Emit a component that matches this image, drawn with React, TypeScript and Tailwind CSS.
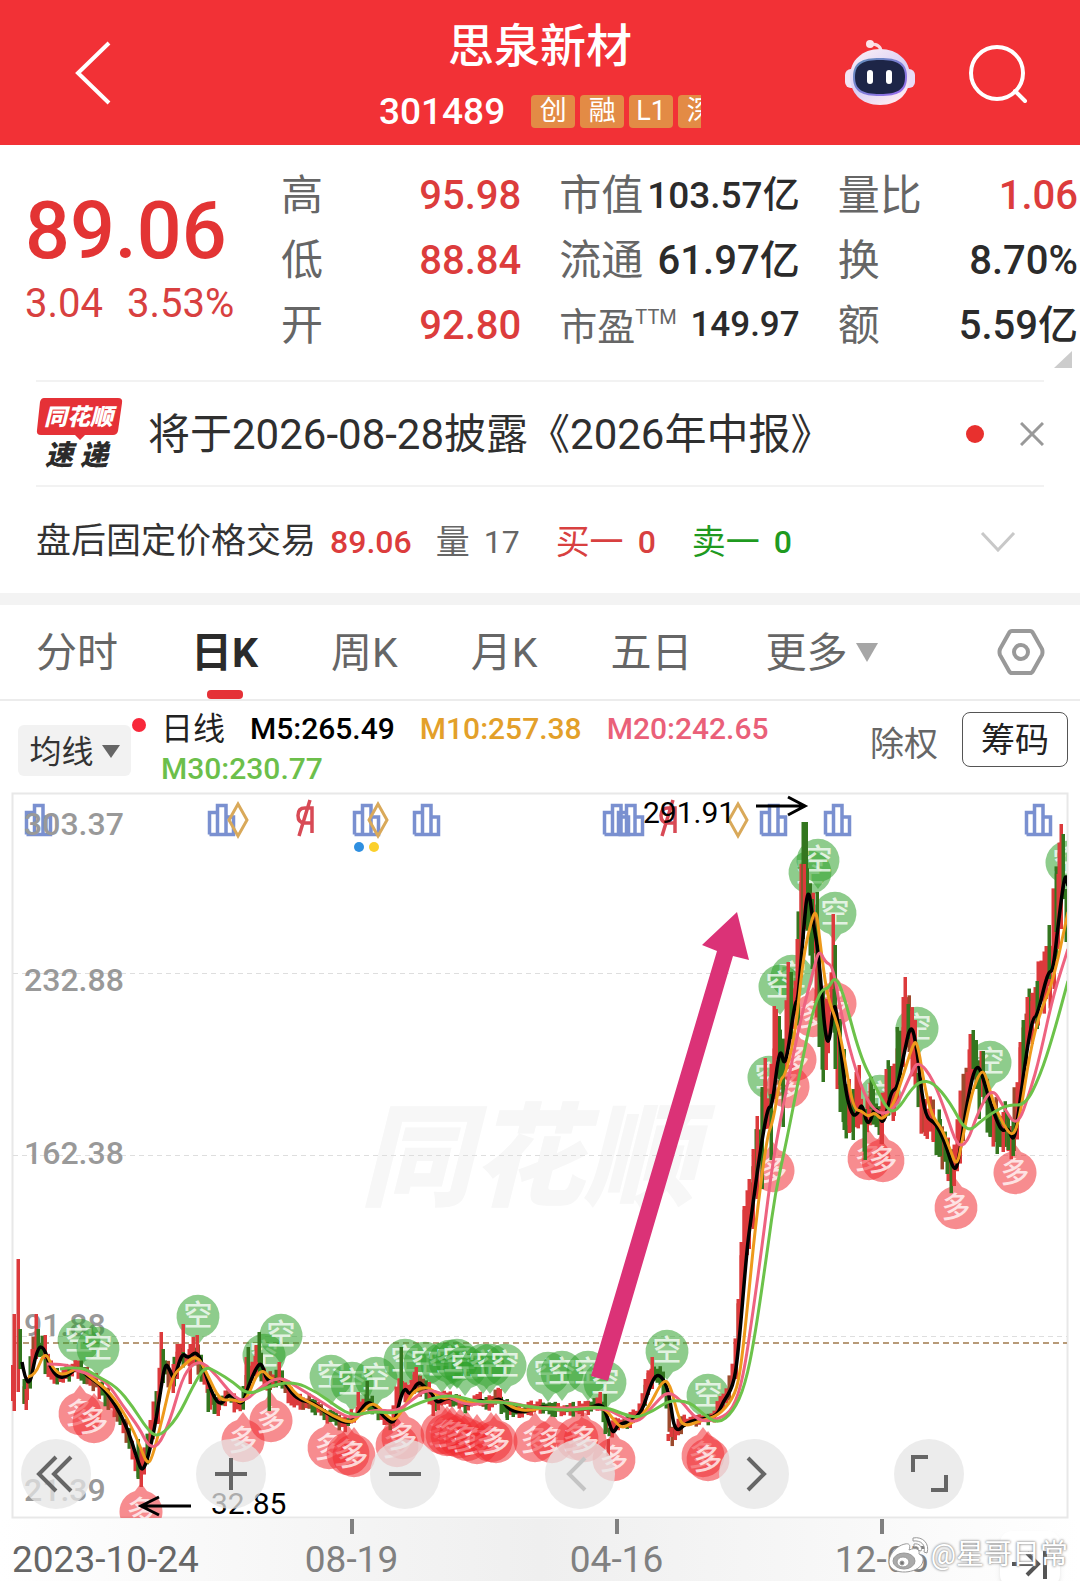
import type { ReactNode } from 'react';

type Point = [number, number];

const MA5: Point[] = [
  [22, 1363], [28, 1397], [37, 1348], [44, 1348], [50, 1368], [58, 1379], [68, 1377], [78, 1367], [87, 1377], [100, 1385],
  [115, 1405], [128, 1430], [137, 1460], [143, 1475], [152, 1443], [159, 1403], [165, 1363], [170, 1371], [174, 1382],
  [182, 1353], [188, 1360], [197, 1351], [205, 1373], [213, 1397], [221, 1407], [230, 1393], [242, 1408], [248, 1388],
  [257, 1367], [262, 1364], [267, 1383], [275, 1380], [283, 1380], [292, 1395], [302, 1402], [312, 1403], [325, 1413],
  [347, 1426], [357, 1417], [367, 1402], [375, 1407], [388, 1422], [395, 1424], [400, 1400], [405, 1388], [410, 1397],
  [418, 1382], [425, 1388], [432, 1394], [437, 1405], [447, 1398], [460, 1402], [470, 1407], [480, 1400], [488, 1405],
  [500, 1398], [508, 1410], [518, 1413], [530, 1412], [542, 1407], [553, 1410], [570, 1410], [587, 1410], [602, 1404],
  [607, 1417], [613, 1436], [618, 1425], [630, 1423], [642, 1413], [650, 1387], [657, 1374], [665, 1382], [670, 1400],
  [675, 1435], [687, 1423], [703, 1420], [717, 1417], [723, 1403], [733, 1388], [738, 1357], [747, 1250], [750, 1227],
  [760, 1153], [768, 1107], [772, 1109], [780, 1044], [785, 1073], [795, 1002], [798, 1002], [803, 937], [808, 884],
  [813, 923], [818, 950], [822, 997], [825, 1033], [829, 1048], [834, 1000], [838, 1023], [845, 1090], [852, 1117],
  [858, 1115], [862, 1103], [868, 1130], [876, 1104], [883, 1130], [891, 1092], [897, 1090], [903, 1060], [911, 1022],
  [917, 1050], [922, 1097], [927, 1120], [935, 1123], [945, 1143], [955, 1176], [960, 1153], [967, 1103], [977, 1059],
  [987, 1093], [997, 1123], [1003, 1133], [1008, 1128], [1014, 1145], [1020, 1103], [1027, 1050], [1033, 1018],
  [1037, 1018], [1048, 972], [1053, 973], [1058, 927], [1065, 872], [1068, 887],
];

const MA10: Point[] = [
  [28, 1378], [35, 1377], [45, 1351], [53, 1370], [63, 1377], [78, 1368], [93, 1380], [110, 1393], [128, 1420], [140, 1447],
  [147, 1465], [152, 1460], [163, 1417], [172, 1377], [183, 1367], [197, 1355], [208, 1377], [220, 1402], [233, 1400],
  [245, 1405], [260, 1367], [272, 1382], [283, 1378], [297, 1397], [313, 1405], [333, 1417], [352, 1425], [362, 1413],
  [373, 1402], [387, 1417], [395, 1422], [405, 1407], [415, 1390], [430, 1388], [440, 1400], [452, 1398], [470, 1405],
  [487, 1402], [503, 1402], [515, 1410], [530, 1412], [543, 1408], [570, 1410], [603, 1407], [613, 1420], [622, 1430],
  [633, 1423], [647, 1412], [663, 1380], [670, 1385], [677, 1413], [683, 1428], [700, 1422], [718, 1417], [733, 1400],
  [740, 1377], [748, 1303], [755, 1230], [767, 1137], [773, 1123], [780, 1080], [785, 1077], [795, 1037], [803, 960],
  [810, 927], [816, 908], [820, 943], [827, 997], [837, 1023], [843, 1050], [853, 1110], [862, 1112], [868, 1118],
  [875, 1113], [882, 1122], [893, 1107], [903, 1077], [912, 1048], [917, 1040], [925, 1090], [932, 1117], [942, 1130],
  [950, 1150], [957, 1169], [963, 1137], [972, 1093], [980, 1073], [985, 1073], [993, 1103], [1003, 1125], [1013, 1139],
  [1020, 1117], [1030, 1053], [1040, 1013], [1053, 983], [1068, 913],
];

const MA20: Point[] = [
  [47, 1365], [67, 1365], [77, 1372], [90, 1375], [107, 1383], [123, 1407], [140, 1430], [148, 1447], [158, 1448],
  [170, 1422], [182, 1380], [192, 1365], [203, 1363], [217, 1377], [233, 1397], [245, 1403], [260, 1388], [280, 1377],
  [297, 1388], [317, 1400], [337, 1413], [353, 1420], [373, 1410], [397, 1413], [413, 1400], [427, 1390], [443, 1395],
  [467, 1407], [487, 1403], [510, 1403], [537, 1410], [603, 1408], [620, 1417], [637, 1425], [653, 1407], [667, 1392],
  [680, 1400], [698, 1423], [720, 1420], [733, 1410], [743, 1380], [753, 1313], [763, 1240], [773, 1160], [787, 1087],
  [800, 1023], [813, 973], [819, 950], [825, 963], [833, 967], [840, 1010], [853, 1063], [867, 1103], [882, 1117],
  [897, 1107], [910, 1077], [918, 1061], [933, 1080], [947, 1117], [957, 1147], [967, 1145], [978, 1113], [992, 1088],
  [1003, 1107], [1017, 1129], [1030, 1093], [1040, 1057], [1053, 997], [1068, 950],
];

const MA30: Point[] = [
  [60, 1370], [80, 1367], [97, 1377], [117, 1388], [133, 1408], [147, 1430], [158, 1439], [177, 1420], [193, 1387],
  [205, 1367], [217, 1373], [233, 1383], [248, 1396], [267, 1388], [293, 1382], [317, 1393], [337, 1408], [353, 1417],
  [373, 1412], [397, 1415], [420, 1403], [450, 1395], [477, 1403], [503, 1403], [530, 1408], [570, 1412], [603, 1407],
  [623, 1415], [637, 1419], [653, 1412], [670, 1401], [690, 1403], [703, 1415], [718, 1425], [733, 1413], [745, 1387],
  [755, 1337], [768, 1247], [775, 1195], [787, 1140], [800, 1073], [813, 1010], [822, 990], [828, 990], [835, 977],
  [843, 993], [860, 1057], [875, 1087], [888, 1112], [897, 1112], [910, 1092], [920, 1082], [933, 1083], [950, 1103],
  [967, 1135], [983, 1120], [1007, 1105], [1025, 1107], [1040, 1077], [1053, 1037], [1068, 982],
];

const RED = '#dc3a3c';
const GREEN = '#33761f';
const BROWN = '#9c4a2c';

// x, high, low, rising
const SPIKES: [number, number, number, 0 | 1][] = [
  [12, 1366, 1402, 1], [14, 1315, 1412, 1], [18, 1260, 1393, 1], [20, 1330, 1370, 0], [24, 1380, 1405, 0], [26, 1390, 1411, 1],
  [32, 1350, 1375, 1], [36, 1315, 1360, 1], [38, 1330, 1350, 0], [45, 1336, 1360, 1], [138, 1440, 1480, 0], [141, 1450, 1488, 1],
  [161, 1333, 1383, 1], [163, 1350, 1384, 0], [158, 1392, 1425, 1], [173, 1365, 1394, 1], [177, 1345, 1380, 1], [183, 1325, 1353, 1],
  [190, 1345, 1385, 1], [193, 1338, 1365, 1], [197, 1336, 1360, 1], [208, 1390, 1413, 0], [214, 1395, 1415, 0], [218, 1400, 1417, 1],
  [246, 1358, 1390, 1], [248, 1348, 1390, 0], [256, 1346, 1375, 1], [259, 1333, 1363, 0], [269, 1380, 1412, 0], [279, 1363, 1385, 1],
  [358, 1393, 1415, 1], [367, 1382, 1400, 0], [399, 1380, 1400, 1], [401, 1348, 1397, 0], [416, 1368, 1390, 1], [433, 1392, 1417, 1],
  [500, 1390, 1402, 1], [507, 1400, 1421, 0], [600, 1393, 1406, 1], [605, 1395, 1435, 0], [608, 1440, 1457, 1], [645, 1380, 1405, 1],
  [648, 1374, 1396, 1], [652, 1358, 1390, 1], [668, 1435, 1442, 1], [671, 1429, 1438, 1], [736, 1340, 1380, 1], [738, 1300, 1350, 1],
  [741, 1243, 1300, 1], [744, 1207, 1280, 1], [749, 1180, 1250, 1], [753, 1150, 1230, 1], [757, 1117, 1200, 1], [762, 1088, 1190, 0],
  [765, 1059, 1130, 1], [771, 1095, 1161, 0], [774, 1007, 1100, 1], [779, 1017, 1080, 0], [776, 1010, 1060, 1], [783, 1060, 1128, 0],
  [788, 963, 1050, 1], [791, 973, 1040, 0], [797, 940, 1010, 1], [801, 883, 960, 1], [803, 823, 940, 0], [806, 823, 920, 0],
  [804, 865, 930, 1], [812, 900, 970, 0], [817, 893, 960, 0], [819, 940, 1048, 0], [823, 990, 1083, 0], [826, 1000, 1071, 1],
  [833, 915, 990, 1], [835, 946, 1070, 0], [840, 1020, 1113, 0], [844, 1050, 1131, 0], [849, 1080, 1134, 1], [853, 1090, 1141, 0],
  [856, 1073, 1110, 1], [859, 1066, 1100, 1], [865, 1110, 1161, 0], [871, 1078, 1110, 0], [881, 1110, 1145, 1], [886, 1070, 1115, 1],
  [889, 1067, 1100, 0], [893, 1090, 1122, 1], [897, 1028, 1090, 0], [903, 998, 1060, 1], [905, 978, 1040, 1], [908, 1005, 1040, 0],
  [912, 1012, 1060, 1], [925, 1100, 1137, 1], [933, 1110, 1143, 1], [940, 1120, 1157, 0], [947, 1140, 1175, 0], [954, 1150, 1187, 1],
  [967, 1073, 1110, 1], [970, 1035, 1090, 1], [973, 1031, 1070, 0], [976, 1041, 1090, 0], [983, 1052, 1080, 0], [979, 1070, 1120, 0],
  [990, 1100, 1138, 0], [997, 1110, 1155, 0], [1003, 1113, 1153, 1], [1008, 1115, 1151, 0], [1013, 1120, 1157, 0],
  [1020, 1043, 1110, 1], [1023, 1021, 1080, 0], [1027, 998, 1050, 1], [1032, 1002, 1045, 1], [1037, 982, 1030, 0],
  [1046, 947, 1000, 1], [1049, 926, 980, 0], [1054, 933, 990, 1], [1058, 875, 950, 1], [1061, 825, 930, 1], [1063, 835, 900, 0],
  [1066, 890, 943, 0],
];

const SHORT_PINS: Point[] = [
  [79, 1341], [98, 1349], [198, 1317], [264, 1356], [281, 1336], [331, 1377], [352, 1384], [376, 1379], [405, 1361],
  [425, 1364], [442, 1365], [450, 1362], [457, 1361], [465, 1368], [483, 1366], [490, 1366], [505, 1366], [548, 1374],
  [562, 1373], [588, 1373], [605, 1383], [667, 1352], [708, 1396], [810, 873], [818, 861], [835, 914], [792, 977],
  [780, 987], [769, 1078], [917, 1029], [880, 1097], [990, 1063], [1067, 863],
];

const LONG_PINS: Point[] = [
  [80, 1415], [94, 1423], [141, 1513], [243, 1442], [271, 1422], [329, 1449], [348, 1455], [354, 1457], [397, 1447],
  [403, 1439], [442, 1434], [447, 1436], [452, 1436], [460, 1438], [467, 1441], [477, 1444], [491, 1442], [496, 1443],
  [535, 1442], [552, 1443], [577, 1440], [585, 1442], [614, 1461], [703, 1457], [708, 1461], [773, 1172], [788, 1088],
  [795, 1061], [835, 1005], [813, 1017], [869, 1160], [883, 1162], [956, 1209], [1015, 1174],
];

const PRICES = [
  { value: '303.37', y: 836 },
  { value: '232.88', y: 992 },
  { value: '162.38', y: 1165 },
  { value: '91.88', y: 1337 },
  { value: '21.39', y: 1502 },
];

function smooth(points: Point[]) {
  let d = `M${points[0][0]} ${points[0][1]}`;
  for (let i = 1; i < points.length - 1; i++) {
    const [x, y] = points[i];
    const [nx, ny] = points[i + 1];
    d += ` Q${x} ${y} ${(x + nx) / 2} ${(y + ny) / 2}`;
  }
  const last = points[points.length - 1];
  return `${d} L${last[0]} ${last[1]}`;
}

function valueAt(points: Point[], x: number) {
  for (let i = 1; i < points.length; i++) {
    if (points[i][0] >= x) {
      const [x0, y0] = points[i - 1];
      const [x1, y1] = points[i];
      return y0 + ((y1 - y0) * (x - x0)) / (x1 - x0);
    }
  }
  return points[points.length - 1][1];
}

function buildBars() {
  const bars: { x: number; top: number; bottom: number; color: string }[] = [];
  let seed = 7;
  const random = () => {
    seed = (seed * 16807) % 2147483647;
    return seed / 2147483647;
  };
  for (let x = 24; x < 1064; x += 3) {
    const y = valueAt(MA5, x + 3);
    const slope = valueAt(MA5, x + 6) - valueAt(MA5, x);
    const range = 5 + (1430 - Math.min(y, 1430)) * 0.04 + Math.abs(slope) * 0.3;
    const top = y - range * (0.4 + random());
    const bottom = y + range * (0.4 + random());
    const r = random();
    const rising = slope < 0 ? r < 0.75 : r < 0.35;
    bars.push({ x, top, bottom, color: rising ? RED : random() < 0.3 ? BROWN : GREEN });
  }
  return bars;
}

const BARS = buildBars();

function Pin({ x, y, kind }: { x: number; y: number; kind: 'short' | 'long' }) {
  const short = kind === 'short';
  return (
    <g transform={`translate(${x} ${y})`}>
      <path
        d={
          short
            ? 'M0 29 L-6 21 A21.5 21.5 0 1 1 6 21 Z'
            : 'M0 -29 L-6 -21 A21.5 21.5 0 1 0 6 -21 Z'
        }
        fill={short ? '#2fa02b' : '#f02a30'}
        fillOpacity={0.54}
      />
      <text y={10} textAnchor="middle" fontSize={29} fontWeight={500} fill="#fff" fillOpacity={0.75}>
        {short ? '空' : '多'}
      </text>
    </g>
  );
}

function ReportMark({ x }: { x: number }) {
  return (
    <path
      transform={`translate(${x} 805)`}
      d="M1.5 30.5 V8.5 H9.5 M9.5 30.5 V1.5 H18 V30.5 M18 13 H25.5 V30.5 H1.5"
      fill="none"
      stroke="#7a90d0"
      strokeWidth={3.5}
    />
  );
}

function DividendMark({ x }: { x: number }) {
  return (
    <path
      transform={`translate(${x} 800)`}
      d="M17 34 V9 H10 Q3 9 3 16.500 Q3 24 10 24 H17 M15 1 L4 37"
      fill="none"
      stroke="#d84a55"
      strokeWidth={3.5}
    />
  );
}

function KLineChart() {
  return (
    <svg viewBox="0 790 1080 730" className="block w-full" role="img" aria-label="日K线">
      <defs>
        <clipPath id="plot">
          <rect x="11" y="794" width="1056" height="725" />
        </clipPath>
      </defs>
      <rect x="12.500" y="794.500" width="1055" height="724" fill="#fff" stroke="#e8e8e8" strokeWidth="2" />
      <text x="360" y="1198" fontSize="112" fontWeight="900" fontStyle="italic" fill="#f7f7f7">同花顺</text>
      <g stroke="#dedede" strokeWidth="1" strokeDasharray="5 4">
        <path d="M13 981 H1067" stroke="none" />
        <path d="M13 974.500 H1067 M13 1156.500 H1067 M13 1337.500 H1067" />
      </g>
      <path d="M13 1344 H1067" stroke="#b79a78" strokeWidth="2" strokeDasharray="6 4" />

      <g>
        {[25, 208, 353, 413, 603, 617, 760, 824, 1025].map((x) => (
          <ReportMark key={x} x={x} />
        ))}
        {[295, 658].map((x) => (
          <DividendMark key={x} x={x} />
        ))}
        {[238, 378, 738].map((x) => (
          <path key={x} d={`M${x} 805 l9 16 l-9 16 l-9 -16 Z`} fill="none" stroke="#d9a95a" strokeWidth="3" />
        ))}
        <circle cx="359" cy="848" r="5" fill="#2f8fe0" />
        <circle cx="374" cy="848" r="5" fill="#fbd02c" />
      </g>

      <g fontSize="32" fill="#999" fontWeight="500">
        {PRICES.map((p) => (
          <text key={p.value} x="24" y={p.y}>
            {p.value}
          </text>
        ))}
      </g>

      <g clipPath="url(#plot)">
        {SHORT_PINS.map(([x, y], i) => (
          <Pin key={i} x={x} y={y} kind="short" />
        ))}
        {LONG_PINS.map(([x, y], i) => (
          <Pin key={i} x={x} y={y} kind="long" />
        ))}
        {BARS.map((b) => (
          <rect key={b.x} x={b.x - 1.5} y={b.top} width={3.5} height={b.bottom - b.top} fill={b.color} />
        ))}
        {SPIKES.map(([x, high, low, rising], i) => (
          <rect key={i} x={x - 1.5} y={high} width={3.5} height={low - high} fill={rising ? RED : GREEN} />
        ))}
        <g fill="none" strokeLinejoin="round" strokeWidth="3">
          <path d={smooth(MA5)} stroke="#000" strokeWidth="3.500" />
          <path d={smooth(MA10)} stroke="#ee9a1c" />
          <path d={smooth(MA20)} stroke="#ee6380" />
          <path d={smooth(MA30)} stroke="#6cc24a" />
        </g>
      </g>

      <g fontSize="30" fill="#000">
        <text x="643" y="824">291.91</text>
        <text x="211" y="1515">32.85</text>
      </g>
      <g fill="none" stroke="#000" strokeWidth="3">
        <path d="M756 807 H804 M788 798 L805 807 L788 816" />
        <path d="M191 1507 H142 M159 1498 L141 1507 L159 1516" />
      </g>
      <path d="M737 913 L749 961 L733 957 L608 1382 L591 1377 L717 952 L702 946 Z" fill="#db3277" />
    </svg>
  );
}

function RobotIcon() {
  return (
    <svg viewBox="0 0 72 66" className="w-[72px]" aria-hidden="true">
      <defs>
        <linearGradient id="shell" x1="0" y1="0" x2="0.600" y2="1">
          <stop offset="0" stopColor="#fff2f6" />
          <stop offset="0.600" stopColor="#d9cff5" />
          <stop offset="1" stopColor="#fbe9f2" />
        </linearGradient>
        <linearGradient id="rim" x1="0" y1="0" x2="1" y2="1">
          <stop offset="0" stopColor="#5f8fb8" />
          <stop offset="1" stopColor="#9a6cf0" />
        </linearGradient>
      </defs>
      <path d="M37 12 C37 6 33 4 27 4" fill="none" stroke="#fbdbe2" strokeWidth="3" />
      <circle cx="26" cy="4" r="4" fill="#fce4ea" />
      <rect x="1" y="29" width="14" height="19" rx="6" fill="#f3e4f3" />
      <rect x="57" y="29" width="14" height="19" rx="6" fill="#e8dcf8" />
      <path d="M36 9 C54 9 66 21 66 36 C66 53 55 65 36 65 C17 65 6 53 6 36 C6 21 18 9 36 9 Z" fill="url(#shell)" />
      <path d="M36 18 C54 18 63 22 63 37 C63 52 54 56 36 56 C18 56 9 52 9 37 C9 22 18 18 36 18 Z" fill="url(#rim)" />
      <path d="M36 20 C53 20 61 24 61 37 C61 50 53 54 36 54 C19 54 11 50 11 37 C11 24 19 20 36 20 Z" fill="#1d2547" />
      <rect x="23" y="30" width="6" height="14" rx="3" fill="#fff" />
      <rect x="42" y="30" width="6" height="14" rx="3" fill="#fff" />
    </svg>
  );
}

function Header() {
  return (
    <header className="grid h-[145px] grid-cols-[1fr_auto_1fr] items-center bg-[#f23136] text-white">
      <button type="button" aria-label="返回" className="ml-[74px] w-fit">
        <svg viewBox="0 0 38 64" className="w-[38px]" fill="none" stroke="#fff" strokeWidth="4">
          <path d="M35 2 L4 32 L35 62" />
        </svg>
      </button>
      <div className="w-[322px] pt-1.5">
        <h1 className="text-center text-[46px] leading-[60px] font-medium">思泉新材</h1>
        <div className="mt-3 flex items-center gap-[26px]">
          <span className="text-[37px] leading-[48px] font-medium">301489</span>
          <div className="flex flex-1 gap-[5px] overflow-hidden text-[27px] leading-[33px]">
            {['创', '融', 'L1', '深'].map((tag) => (
              <span key={tag} className="w-11 shrink-0 rounded-sm bg-[#e38b45] text-center">
                {tag}
              </span>
            ))}
          </div>
        </div>
      </div>
      <div className="mr-[52px] flex items-center justify-end gap-[52px]">
        <button type="button" aria-label="智能助手">
          <RobotIcon />
        </button>
        <button type="button" aria-label="搜索">
          <svg viewBox="0 0 60 60" className="w-[60px]" fill="none" stroke="#fff" strokeWidth="4">
            <circle cx="29" cy="30" r="26" />
            <path d="M47 48 L57 58" strokeLinecap="round" strokeWidth="4" />
          </svg>
        </button>
      </div>
    </header>
  );
}

type StatProps = { label: ReactNode; value: string; tone?: string; size?: string };

function Stat({ label, value, tone = 'text-[#2b2b2b]', size = 'text-[40px]' }: StatProps) {
  return (
    <div className="flex h-[65px] items-center justify-between whitespace-nowrap">
      <dt className="text-[42px] text-[#666]">{label}</dt>
      <dd className={`font-medium ${size} ${tone}`}>{value}</dd>
    </div>
  );
}

function Quote() {
  return (
    <section className="relative grid grid-cols-[218px_1fr_1fr_1fr] gap-x-[38px] pt-[18px] pr-0.5 pb-[22px] pl-[25px]">
      <div className="pt-7 text-[#e33434]">
        <div className="text-[79px] leading-20 font-medium">89.06</div>
        <div className="mt-2 flex gap-6 text-[40px] leading-[50px] text-[#d84040]">
          <span>3.04</span>
          <span>3.53%</span>
        </div>
      </div>
      <dl>
        <Stat label="高" value="95.98" tone="text-[#dc3c3c]" />
        <Stat label="低" value="88.84" tone="text-[#dc3c3c]" />
        <Stat label="开" value="92.80" tone="text-[#dc3c3c]" />
      </dl>
      <dl>
        <Stat label="市值" value="103.57亿" size="text-[37px]" />
        <Stat label="流通" value="61.97亿" />
        <Stat
          label={<span className="text-[38px]">市盈<sup className="-top-4 text-[20px]">TTM</sup></span>}
          value="149.97"
          size="text-[35px]"
        />
      </dl>
      <dl>
        <Stat label="量比" value="1.06" tone="text-[#dc3c3c]" />
        <Stat label="换" value="8.70%" />
        <Stat label="额" value="5.59亿" />
      </dl>
      <svg viewBox="0 0 18 17" className="absolute right-2 bottom-3 w-[18px]" aria-hidden="true">
        <path d="M18 0 V17 H0 Z" fill="#ccc" />
      </svg>
    </section>
  );
}

function NewsLogo() {
  return (
    <svg viewBox="0 0 88 74" className="w-[88px] overflow-visible" role="img" aria-label="同花顺速递">
      <path d="M8 1 H82 Q87 1 86 6 L82 34 Q81 38 77 38 H49 L44 43 L39 38 H5 Q0 38 1 33 L4 5 Q5 1 8 1 Z" fill="#e53137" />
      <text x="8" y="28" fontSize="23" fontWeight="900" fontStyle="italic" fill="#fff">同花顺</text>
      <text x="9" y="68" fontSize="28" fontWeight="900" fontStyle="italic" fill="#2b2b2b">速</text>
      <text x="44" y="68" fontSize="28" fontWeight="900" fontStyle="italic" fill="#2b2b2b">递</text>
    </svg>
  );
}

function News() {
  return (
    <div className="mx-9 flex h-[107px] items-center border-y-2 border-[#f2f2f2]">
      <NewsLogo />
      <a href="#news" className="ml-6 flex-1 pt-0.5 text-[42px] whitespace-nowrap text-[#2f2f2f]">
        将于2026-08-28披露《2026年中报》
      </a>
      <span className="size-[18px] rounded-full bg-[#e8302e]" />
      <button type="button" aria-label="关闭" className="ml-9">
        <svg viewBox="0 0 24 24" className="w-6" stroke="#999" strokeWidth="3">
          <path d="M1 1 L23 23 M23 1 L1 23" />
        </svg>
      </button>
    </div>
  );
}

function AfterHours() {
  return (
    <div className="flex h-[106px] items-center pt-1 pr-16 pl-9 text-[32px] whitespace-nowrap">
      <span className="text-[35px] text-[#333]">盘后固定价格交易</span>
      <span className="ml-3.5 font-medium text-[#dc3c3c]">89.06</span>
      <span className="ml-6 text-[34px] text-[#666]">量</span>
      <span className="ml-3.5 text-[#666]">17</span>
      <span className="ml-9 text-[34px] text-[#d84040]">买一</span>
      <span className="ml-3.5 font-medium text-[#d84040]">0</span>
      <span className="ml-9 text-[34px] text-[#1f9a1f]">卖一</span>
      <span className="ml-3.5 font-medium text-[#1f9a1f]">0</span>
      <button type="button" aria-label="展开" className="ml-auto">
        <svg viewBox="0 0 36 20" className="w-9" fill="none" stroke="#c8c8c8" strokeWidth="3">
          <path d="M2 1 L18 18 L34 1" />
        </svg>
      </button>
    </div>
  );
}

const TABS = ['分时', '日K', '周K', '月K', '五日'];

function Tabs() {
  return (
    <nav className="flex h-24 items-stretch justify-between border-b-2 border-[#ececec] pr-[35px] pl-9 text-[41px] text-[#666]">
      <div className="flex gap-[73px]">
        {TABS.map((tab) => (
          <button
            key={tab}
            type="button"
            className={tab === '日K' ? 'relative pt-1 font-bold text-[#2b2b2b]' : 'relative pt-1'}
          >
            {tab}
            {tab === '日K' && (
              <span className="absolute bottom-0 left-1/2 h-[9px] w-9 -translate-x-1/2 rounded bg-[#e53137]" />
            )}
          </button>
        ))}
        <button type="button" className="flex items-center gap-2 pt-1">
          更多
          <svg viewBox="0 0 22 19" className="mb-1 w-[22px]" aria-hidden="true">
            <path d="M0 0 H22 L11 19 Z" fill="#a6a6a6" />
          </svg>
        </button>
      </div>
      <button type="button" aria-label="设置">
        <svg viewBox="0 0 48 46" className="w-12" fill="none" stroke="#999" strokeWidth="4">
          <path d="M15 2 H33 Q35 2 36 4 L45 20 Q46 23 45 26 L36 42 Q35 44 33 44 H15 Q13 44 12 42 L3 26 Q2 23 3 20 L12 4 Q13 2 15 2 Z" />
          <circle cx="24" cy="23" r="7" />
        </svg>
      </button>
    </nav>
  );
}

function Indicators() {
  return (
    <div className="flex h-[88px] items-start pr-3 pl-[18px]">
      <div className="relative mt-6">
        <button type="button" className="flex h-[51px] w-[113px] items-center justify-center gap-2 rounded-md bg-[#f2f2f2] pt-0.5 text-[32px] whitespace-nowrap text-[#333]">
          均线
          <svg viewBox="0 0 18 13" className="w-[18px]" aria-hidden="true">
            <path d="M0 0 H18 L9 13 Z" fill="#666" />
          </svg>
        </button>
        <span className="absolute -top-[7px] -right-[15px] size-3.5 rounded-full bg-[#f8283a]" />
      </div>
      <div className="ml-[30px] flex w-[640px] flex-wrap gap-x-[25px] pt-2 text-[30px] leading-10 font-medium whitespace-nowrap">
        <span className="text-[32px] font-normal text-[#222]">日线</span>
        <span className="text-black">M5:265.49</span>
        <span className="text-[#e3a02a]">M10:257.38</span>
        <span className="text-[#ea6079]">M20:242.65</span>
        <span className="text-[#6cbf4b]">M30:230.77</span>
      </div>
      <button type="button" className="mt-[18px] ml-auto text-[34px] whitespace-nowrap text-[#666]">
        除权
      </button>
      <button type="button" className="mt-[11px] ml-6 h-[55px] w-[106px] rounded-lg border border-[#555] pt-0.5 text-[34px] whitespace-nowrap text-[#222]">
        筹码
      </button>
    </div>
  );
}

const TOOLS = [
  { name: '最早', d: 'M35 18 L18 35 L35 52 M50 18 L33 35 L50 52', faded: false },
  { name: '放大', d: 'M19 35 H51 M35 19 V51', faded: false },
  { name: '缩小', d: 'M19 35 H51', faded: false },
  { name: '向左', d: 'M40 19 L24 35 L40 51', faded: true },
  { name: '向右', d: 'M29 19 L45 35 L29 51', faded: false },
  { name: '全屏', d: 'M19 33 V18 H34 M37 51 H52 V36', faded: false },
];

function ChartTools() {
  return (
    <div className="absolute right-[116px] bottom-2.5 left-[21px] flex justify-between">
      {TOOLS.map((tool) => (
        <button key={tool.name} type="button" aria-label={tool.name} className="size-[70px] rounded-full bg-[#e6e6e6]/75">
          <svg viewBox="0 0 70 70" className="w-full" fill="none" stroke={tool.faded ? '#c4c4c4' : '#666'} strokeWidth="4">
            <path d={tool.d} />
          </svg>
        </button>
      ))}
    </div>
  );
}

function DateAxis() {
  return (
    <div className="relative flex h-[62px] overflow-hidden bg-linear-to-r from-white via-[#efefef] to-white text-[37px] leading-10 text-[#808080]">
      <span className="w-[219px] pt-[21px] pl-3 whitespace-nowrap text-[#666]">2023-10-24</span>
      {['08-19', '04-16', '12-05'].map((date) => (
        <div key={date} className="flex w-[265px] flex-col items-center">
          <span className="h-[15px] w-1 bg-[#808080]" />
          <span className="mt-1.5">{date}</span>
        </div>
      ))}
      <button type="button" aria-label="最新" className="absolute top-3 right-5 h-14 w-[60px] rounded-xl bg-white shadow-md">
        <svg viewBox="0 0 60 56" className="w-full" fill="none" stroke="#555" strokeWidth="4">
          <path d="M12 33 H38 M27 22 L38 33 L27 44 M45 20 V48" />
        </svg>
      </button>
      <div className="absolute right-3 bottom-1.5 flex items-center">
        <svg viewBox="0 0 44 40" className="w-11" fill="#fff" stroke="#999" strokeWidth="1">
          <path d="M18 9 C8 11 -1 23 3 31 C9 41 34 38 36 26 C37 21 33 20 32 19 C33 14 29 12 22 15 C24 10 22 8 18 9 Z" />
          <path d="M26 3 C36 1 43 9 40 18 L37 17 C39 10 34 5 26 6 Z M27 9 C32 8 36 12 34 16 L31 15 C32 12 30 11 27 12 Z" />
          <ellipse cx="17" cy="26" rx="11" ry="8" fill="#aaa" />
          <ellipse cx="16" cy="27" rx="6" ry="5" />
          <circle cx="15" cy="28" r="2" fill="#777" />
        </svg>
        <span className="text-[28px] leading-8 text-white [text-shadow:0_0_2px_#888,0_0_3px_#999]">@星哥日常</span>
      </div>
    </div>
  );
}

export default function App() {
  return (
    <main className="min-h-screen overflow-hidden bg-white font-[Roboto,'Noto_Sans_CJK_SC',sans-serif]">
      <Header />
      <Quote />
      <News />
      <AfterHours />
      <div className="h-3 bg-[#f3f3f3]" />
      <Tabs />
      <Indicators />
      <div className="relative">
        <KLineChart />
        <ChartTools />
      </div>
      <DateAxis />
    </main>
  );
}
